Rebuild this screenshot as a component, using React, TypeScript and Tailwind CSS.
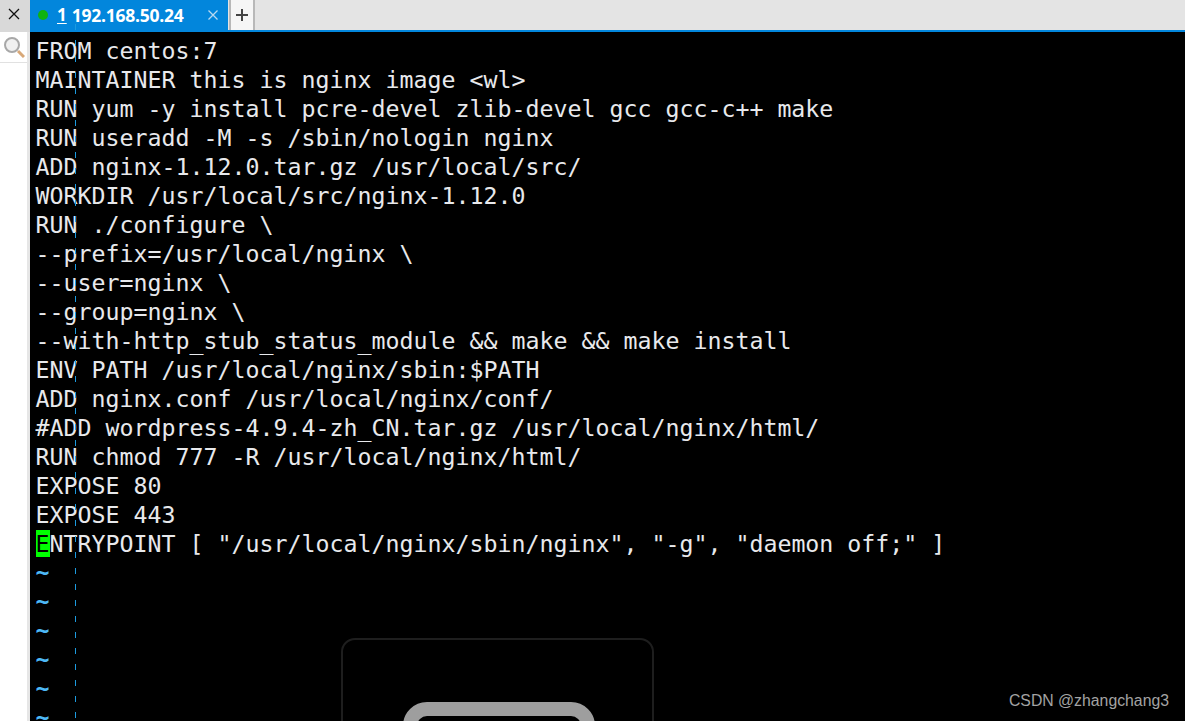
const lines = [
  "FROM centos:7",
  "MAINTAINER this is nginx image <wl>",
  "RUN yum -y install pcre-devel zlib-devel gcc gcc-c++ make",
  "RUN useradd -M -s /sbin/nologin nginx",
  "ADD nginx-1.12.0.tar.gz /usr/local/src/",
  "WORKDIR /usr/local/src/nginx-1.12.0",
  "RUN ./configure \\",
  "--prefix=/usr/local/nginx \\",
  "--user=nginx \\",
  "--group=nginx \\",
  "--with-http_stub_status_module && make && make install",
  "ENV PATH /usr/local/nginx/sbin:$PATH",
  "ADD nginx.conf /usr/local/nginx/conf/",
  "#ADD wordpress-4.9.4-zh_CN.tar.gz /usr/local/nginx/html/",
  "RUN chmod 777 -R /usr/local/nginx/html/",
  "EXPOSE 80",
  "EXPOSE 443",
]

const App = () => {
  return (
    <div className="flex h-[721px] w-[1185px] flex-col overflow-hidden bg-white font-['DejaVu_Sans_Mono',monospace]">
      {/* tab bar */}
      <div className="flex h-8 shrink-0 bg-[#e4e4e4]">
        <div className="flex w-[30px] items-center justify-center bg-[#d9d9d9] pb-[4px] pr-[3px]">
          <svg width="12" height="12" viewBox="0 0 12 12" stroke="#111" strokeWidth="1.3">
            <path d="M1 1l10 10M11 1L1 11" />
          </svg>
        </div>
        <div className="flex min-w-0 flex-1 flex-col">
          <div className="flex h-[30px]">
            <div className="flex w-[198px] items-center bg-[#0286dc] pl-[8px] font-['Open_Sans',sans-serif] text-white">
              <span className="mb-[1px] h-2.5 w-2.5 rounded-full bg-[#0fb30f]" />
              <span className="ml-[9px] text-[17px] font-bold underline underline-offset-2">1</span>
              <span className="ml-[5px] whitespace-nowrap text-[17.5px] font-bold tracking-[-0.25px]">192.168.50.24</span>
              <svg className="ml-auto mr-[10px]" width="10" height="10" viewBox="0 0 10 10" stroke="#b9d9f0" strokeWidth="1.3">
                <path d="M0.5 0.5l9 9M9.5 0.5l-9 9" />
              </svg>
            </div>
            <div className="ml-px flex w-[26px] items-center justify-center border-x-2 border-[#b8b8b8] bg-[#f6f6f6]">
              <svg width="12" height="12" viewBox="0 0 12 12" stroke="#444" strokeWidth="2">
                <path d="M6 0v12M0 6h12" />
              </svg>
            </div>
          </div>
          <div className="h-[2px] bg-[#0286dc]" />
        </div>
      </div>

      <div className="flex min-h-0 flex-1">
        {/* search strip */}
        <div className="w-[30px] shrink-0 border-r-[3px] border-[#e6e6e6] bg-white">
          <div className="flex h-[31px] items-center justify-center border-b border-[#e1e1e1]">
            <svg width="22" height="22" viewBox="0 0 22 22" fill="none">
              <circle cx="9" cy="9" r="7" stroke="#a8a8a8" strokeWidth="2" fill="#f0f0f0" />
              <path d="M15 15l6 6" stroke="#d8a878" strokeWidth="3" />
            </svg>
          </div>
        </div>

        {/* terminal */}
        <div className="relative min-w-0 flex-1 bg-black pl-[5.5px] pt-1">
          {lines.map((line) => (
            <div key={line} className="h-[29px] whitespace-pre text-[23.25px] leading-[29px] text-[#e8e9ec]">
              {line}
            </div>
          ))}
          <div className="h-[29px] whitespace-pre text-[23.25px] leading-[29px] text-[#e8e9ec]">
            <span className="bg-[#00ff00] text-black">E</span>
            {'NTRYPOINT [ "/usr/local/nginx/sbin/nginx", "-g", "daemon off;" ]'}
          </div>
          {[0, 1, 2, 3, 4, 5].map((n) => (
            <div key={n} className="h-[29px] -translate-y-px text-[23.25px] font-bold leading-[29px] text-[#4db8f5]">
              ~
            </div>
          ))}

          {/* column guide */}
          <div className="absolute -top-2 bottom-0 left-[45px] w-px bg-[repeating-linear-gradient(to_bottom,#1c9be0_0,#1c9be0_6px,transparent_6px,transparent_16px)]" />

          {/* watermark lock behind the text */}
          <div className="absolute left-[311px] top-[606px] h-[200px] w-[313px] rounded-[14px] border-2 border-[#1e1e1e]">
            <div className="absolute left-[60px] top-[62px] h-[100px] w-[192px] rounded-[24px] border-[14px] border-[#9e9e9e]" />
          </div>

          <div className="absolute bottom-[8px] right-4 font-['Liberation_Sans',sans-serif] text-[15.8px] text-[#a3a3a3]">
            CSDN @zhangchang3
          </div>
        </div>
      </div>
    </div>
  )
}

export default App
